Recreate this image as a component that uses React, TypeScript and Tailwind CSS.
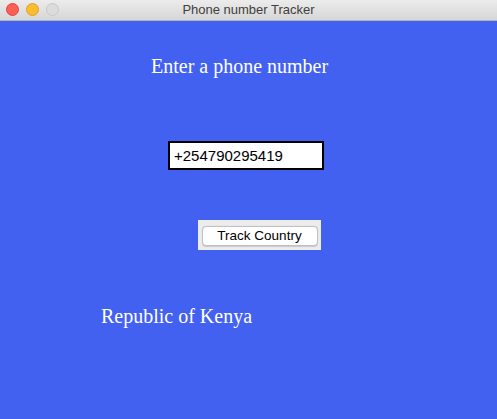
export default function App() {
  return (
    <div className="flex h-[419px] w-[497px] flex-col overflow-hidden bg-[#4361f1]">
      <div className="relative flex h-[21px] shrink-0 items-center justify-center border-b border-[#b4b4b4] bg-gradient-to-b from-[#ececec] to-[#d6d6d6]">
        <div className="absolute left-[6px] top-[3px] flex gap-[7px]">
          <span className="h-[13px] w-[13px] rounded-full border border-[#e0443e] bg-[#fc5f57]" />
          <span className="h-[13px] w-[13px] rounded-full border border-[#dea123] bg-[#fdbc2e]" />
          <span className="h-[13px] w-[13px] rounded-full border border-[#c8c8c8] bg-[#dcdcdc]" />
        </div>
        <span className="font-['Liberation_Sans',sans-serif] text-[13px] text-[#404040]">Phone number Tracker</span>
      </div>

      <div className="flex flex-col font-['Liberation_Serif',serif] text-white">
        <p className="ml-[151px] mt-[33px] text-[20px] leading-[24px]">Enter a phone number</p>

        <div className="ml-[168px] mt-[63px] flex h-[29px] w-[156px] items-center border-2 border-black bg-white px-[4px]">
          <span className="font-['Liberation_Sans',sans-serif] text-[15px] leading-none text-black">+254790295419</span>
        </div>

        <div className="ml-[198px] mt-[50px] flex h-[30px] w-[123px] items-end justify-center bg-[#ececec] pb-[4px]">
          <button className="flex h-[20px] w-[116px] items-center justify-center rounded-[4px] border border-[#c0c0c0] bg-white font-['Liberation_Sans',sans-serif] text-[13.5px] text-black shadow-[0_0.5px_1px_rgba(0,0,0,0.15)]">
            Track Country
          </button>
        </div>

        <p className="ml-[101px] mt-[54px] text-[20px] leading-[24px]">Republic of Kenya</p>
      </div>
    </div>
  );
}
